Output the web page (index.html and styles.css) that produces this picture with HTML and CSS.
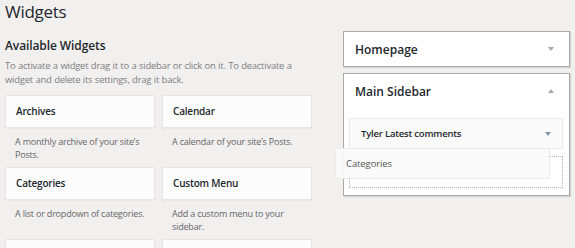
FILE: index.html
```
<!DOCTYPE html>
<html lang="en">
<head>
  <meta charset="UTF-8">
  <title>Widgets</title>
  <link rel="stylesheet" href="styles.css">
</head>
<body>
  <div class="wrap">
    <h1 class="page-title">Widgets</h1>

    <div class="columns">
      <!-- Available widgets -->
      <div class="available">
        <h2 class="section-title">Available Widgets</h2>
        <p class="section-desc">To activate a widget drag it to a sidebar or click on it. To deactivate a widget and delete its settings, drag it back.</p>

        <div class="widget-list">
          <div class="widget">
            <div class="widget-top">Archives</div>
            <div class="widget-desc">A monthly archive of your site’s Posts.</div>
          </div>
          <div class="widget">
            <div class="widget-top">Calendar</div>
            <div class="widget-desc">A calendar of your site’s Posts.</div>
          </div>
          <div class="widget">
            <div class="widget-top">Categories</div>
            <div class="widget-desc">A list or dropdown of categories.</div>
          </div>
          <div class="widget">
            <div class="widget-top">Custom Menu</div>
            <div class="widget-desc">Add a custom menu to your sidebar.</div>
          </div>
          <!-- next row, only its top edge is in view -->
          <div class="widget">
            <div class="widget-top"></div>
          </div>
          <div class="widget">
            <div class="widget-top"></div>
          </div>
        </div>
      </div>

      <!-- Sidebars -->
      <div class="sidebars">
        <div class="sidebar closed">
          <div class="sidebar-name">
            <span>Homepage</span>
            <span class="arrow down"></span>
          </div>
        </div>

        <div class="sidebar">
          <div class="sidebar-name">
            <span>Main Sidebar</span>
            <span class="arrow up"></span>
          </div>
          <div class="sidebar-body">
            <div class="sidebar-widget">
              <span>Tyler Latest comments</span>
              <span class="arrow down blue"></span>
            </div>
            <div class="placeholder"></div>
          </div>
          <!-- widget being dragged -->
          <div class="drag-helper">Categories</div>
        </div>
      </div>
    </div>
  </div>
</body>
</html>
```

FILE: styles.css
```
* {
  box-sizing: border-box;
}

body {
  margin: 0;
  background-color: #f2efef;
  font-family: 'Open Sans', 'Noto Sans', sans-serif;
  color: #222;
  overflow: hidden;
  height: 248px;
}

.wrap {
  padding: 0 5px;
}

.page-title {
  margin: 0;
  font-size: 17px;
  font-weight: 400;
  letter-spacing: -0.3px;
  line-height: 24px;
  color: #23282d;
  height: 31px;
}

.columns {
  display: flex;
  align-items: flex-start;
}

.available {
  width: 306px;
}

.section-title {
  margin: 6px 0 0;
  font-size: 12px;
  font-weight: 600;
  letter-spacing: -0.1px;
  line-height: 18px;
  color: #23282d;
}

.section-desc {
  margin: 4px 0 0;
  max-width: 290px;
  font-size: 9.5px;
  letter-spacing: -0.25px;
  word-spacing: 0.3px;
  line-height: 14px;
  color: #808080;
}

.widget-list {
  margin-top: 8px;
  display: grid;
  grid-template-columns: 150px 150px;
  column-gap: 7px;
}

.widget {
  height: 72px;
}

.widget-top {
  height: 33px;
  background-color: #fcfcfc;
  border: 1px solid #e6e4e4;
  box-shadow: 0 1px 1px rgba(0, 0, 0, 0.03);
  padding: 0 10px;
  font-size: 10px;
  font-weight: 600;
  letter-spacing: -0.2px;
  line-height: 31px;
  color: #23282d;
}

.widget-desc {
  padding: 7px 10px 0;
  font-size: 9px;
  letter-spacing: -0.2px;
  line-height: 13px;
  color: #666;
}

.sidebars {
  margin-left: 32px;
  width: 229px;
}

.sidebar {
  position: relative;
  background-color: #fff;
  border: 1px solid #a9a9a9;
  box-shadow: 1px 1px 1px rgba(0, 0, 0, 0.12);
  margin-bottom: 6px;
}

.sidebar-name {
  display: flex;
  justify-content: space-between;
  align-items: center;
  height: 34px;
  padding: 0 15px 0 11px;
  font-size: 12px;
  font-weight: 600;
  color: #23282d;
}

.sidebar-body {
  padding: 10px 6px 7px 5px;
}

.sidebar-widget {
  display: flex;
  justify-content: space-between;
  align-items: center;
  height: 31px;
  background-color: #fafafa;
  border: 1px solid #ebeaea;
  padding: 0 11px 0 11px;
  font-size: 9.5px;
  font-weight: 600;
  letter-spacing: -0.2px;
  color: #23282d;
}

.placeholder {
  margin-top: 7px;
  height: 32px;
  border: 1px dotted #b5b5b5;
}

.drag-helper {
  position: absolute;
  left: -9px;
  top: 74px;
  width: 215px;
  height: 31px;
  background-color: rgba(250, 250, 250, 0.92);
  border: 1px solid #ebebeb;
  padding: 0 10px;
  font-size: 9.5px;
  letter-spacing: -0.1px;
  line-height: 29px;
  color: #555;
}

.arrow {
  width: 0;
  height: 0;
  border-left: 3px solid transparent;
  border-right: 3px solid transparent;
}

.arrow.down {
  border-top: 4px solid #aaa;
}

.arrow.up {
  border-bottom: 4px solid #aaa;
}

.arrow.blue {
  border-top-color: #8497a8;
}
```
